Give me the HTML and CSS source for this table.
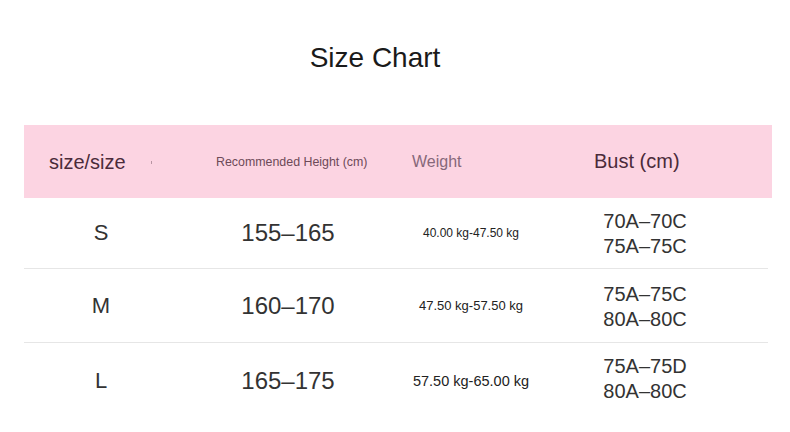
FILE: index.html
```html
<!DOCTYPE html>
<html>
<head>
<meta charset="utf-8">
<link rel="stylesheet" href="styles.css">
</head>
<body>
<div class="page">
  <h1 class="title">Size Chart</h1>
  <div class="head">
    <div class="h h-size">size/size<span class="dot"></span></div>
    <div class="h h-height">Recommended Height (cm)</div>
    <div class="h h-weight">Weight</div>
    <div class="h h-bust">Bust (cm)</div>
  </div>
  <div class="row r1">
    <div class="c size">S</div>
    <div class="c height">155–165</div>
    <div class="c weight w1">40.00 kg-47.50 kg</div>
    <div class="c bust"><span>70A–70C</span><span>75A–75C</span></div>
  </div>
  <div class="row r2">
    <div class="c size">M</div>
    <div class="c height">160–170</div>
    <div class="c weight w2">47.50 kg-57.50 kg</div>
    <div class="c bust"><span>75A–75C</span><span>80A–80C</span></div>
  </div>
  <div class="row r3">
    <div class="c size">L</div>
    <div class="c height">165–175</div>
    <div class="c weight w3">57.50 kg-65.00 kg</div>
    <div class="c bust"><span>75A–75D</span><span>80A–80C</span></div>
  </div>
</div>
</body>
</html>
```
FILE: styles.css
```css
html, body {
  margin: 0;
  padding: 0;
  background: #ffffff;
}
body {
  font-family: "Liberation Sans", Arial, sans-serif;
  width: 790px;
  height: 432px;
  overflow: hidden;
}
.page {
  padding-top: 40px;
}
.title {
  margin: 0;
  height: 36px;
  line-height: 36px;
  text-align: center;
  font-weight: normal;
  font-size: 28px;
  color: #1a1a1a;
  padding-right: 40px;
  box-sizing: border-box;
}
.head {
  margin: 49px 18px 0 24px;
  height: 73px;
  background: #fcd4e2;
  display: flex;
  align-items: center;
}
.h {
  white-space: nowrap;
}
.h-size {
  font-size: 20px;
  color: #4b2b3a;
  padding-left: 25px;
  width: 167px;
  display: flex;
  align-items: center;
  box-sizing: border-box;
  padding-top: 2px;
}
.dot {
  display: inline-block;
  width: 1px;
  height: 3px;
  background: #b895a3;
  margin-left: 25px;
}
.h-height {
  font-size: 12.4px;
  color: #6d4a58;
  width: 196px;
  padding-left: 25px;
  box-sizing: border-box;
}
.h-weight {
  font-size: 16px;
  color: #86687a;
  width: 182px;
  padding-left: 25px;
  box-sizing: border-box;
}
.h-bust {
  font-size: 20px;
  color: #4b2b3a;
  padding-left: 25px;
}
.row {
  margin: 0 22px 0 24px;
  display: grid;
  grid-template-columns: 154px 220px 146px 202px;
  align-items: center;
  border-bottom: 1px solid #e6e6e6;
  color: #333333;
}
.r1 { height: 70px; }
.r2 { height: 73px; }
.r3 { height: 76px; border-bottom: none; }
.c {
  text-align: center;
  white-space: nowrap;
}
.size {
  font-size: 22px;
  color: #333333;
}
.height {
  font-size: 24px;
  color: #333333;
}
.weight {
  color: #222222;
}
.w1 { font-size: 12px; }
.w2 { font-size: 13px; }
.w3 { font-size: 14.5px; }
.bust {
  display: flex;
  flex-direction: column;
  align-items: center;
  font-size: 20px;
  line-height: 25px;
  color: #333333;
  padding-top: 2px;
}
.r3 .bust {
  padding-top: 0;
  padding-bottom: 4px;
}
```
